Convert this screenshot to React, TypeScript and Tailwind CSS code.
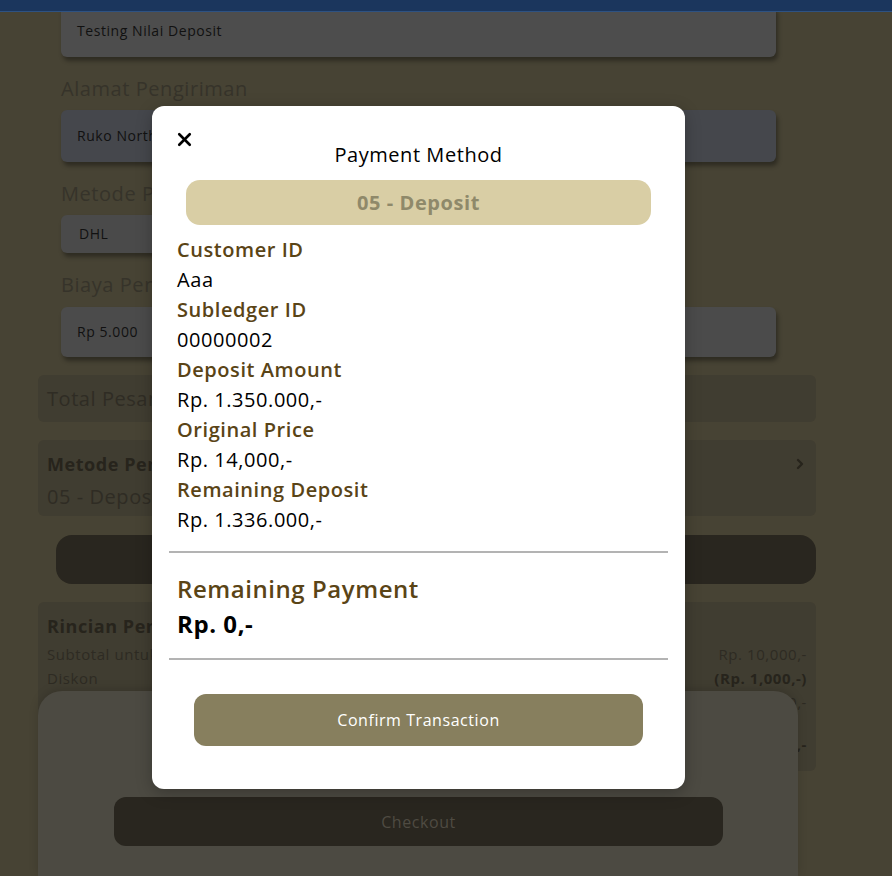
import React from "react";
import { ChevronRight, X } from "lucide-react";

const rows = [
  { label: "Customer ID", value: "Aaa" },
  { label: "Subledger ID", value: "00000002" },
  { label: "Deposit Amount", value: "Rp. 1.350.000,-" },
  { label: "Original Price", value: "Rp. 14,000,-" },
  { label: "Remaining Deposit", value: "Rp. 1.336.000,-" },
];

function Field({ children, className }: { children: React.ReactNode; className?: string }) {
  return (
    <div
      className={
        "flex items-center rounded-md px-4 text-sm text-[#111] shadow-[2px_4px_4px_rgba(0,0,0,0.35)] " +
        (className ?? "")
      }
    >
      {children}
    </div>
  );
}

function Label({ children }: { children: React.ReactNode }) {
  return <div className="mt-[17px] h-[30px] text-xl leading-[30px] text-[#36332a]">{children}</div>;
}

function PaymentModal() {
  return (
    <div className="absolute left-[152px] top-[106px] w-[533px] rounded-xl bg-white px-[17px] pb-[43px] pt-[34px] shadow-[0_4px_16px_rgba(0,0,0,0.25)]">
      <button className="absolute left-[22px] top-[23px] text-black">
        <X size={21} strokeWidth={3} />
      </button>
      <div className="h-[30px] text-center text-xl leading-[30px] text-black">Payment Method</div>
      <div className="mx-[17px] mt-[10px] flex h-[45px] items-center justify-center rounded-[14px] bg-[#d9cea5] text-xl font-bold text-[#8f896a]">
        05 - Deposit
      </div>
      <div className="mt-[10px] px-2">
        {rows.map((r) => (
          <div key={r.label}>
            <div className="h-[30px] text-xl font-semibold leading-[30px] text-[#5a4416]">{r.label}</div>
            <div className="h-[30px] text-xl leading-[30px] text-black">{r.value}</div>
          </div>
        ))}
      </div>
      <div className="mt-4 h-[2px] bg-[#b3b3b3]" />
      <div className="mt-[18px] px-2">
        <div className="h-[35px] text-2xl font-semibold leading-[35px] text-[#5a4416]">Remaining Payment</div>
        <div className="h-[35px] text-2xl font-bold leading-[35px] text-black">Rp. 0,-</div>
      </div>
      <div className="mt-[17px] h-[2px] bg-[#b3b3b3]" />
      <button className="mx-auto mt-[34px] flex h-[52px] w-[449px] items-center justify-center rounded-xl bg-[#877f5e] text-base font-medium text-white">
        Confirm Transaction
      </button>
    </div>
  );
}

export default function App() {
  return (
    <div className="relative h-[876px] overflow-hidden bg-[#474334] font-['Open_Sans',sans-serif] tracking-[0.035em]">
      <div className="relative z-10 h-3 border-b border-[#2e5282] bg-[#1b365d]" />

      <div className="ml-[38px] w-[778px]">
        <div className="pl-[23px] pr-[40px]">
          <Field className="-mt-[7px] h-[52px] bg-[#4d4d4d]">Testing Nilai Deposit</Field>
          <Label>Alamat Pengiriman</Label>
          <Field className="mt-[6px] h-[52px] bg-[#45474c]">Ruko North</Field>
          <Label>Metode Pengiriman</Label>
          <Field className="mt-[6px] h-[38px] w-[320px] bg-[#4a4a4a] text-base text-[#2b2b2b] shadow-[1px_3px_3px_rgba(0,0,0,0.25)]">
            <span className="pl-[2px]">DHL</span>
          </Field>
          <Label>Biaya Pengiriman</Label>
          <Field className="mt-[7px] h-[50px] bg-[#4b4b4b]">Rp 5.000</Field>
        </div>

        <div className="mt-[18px] flex h-[47px] items-center rounded-md bg-[#403d31] px-[9px] text-xl text-[#2f2c24]">
          Total Pesanan
        </div>

        <div className="mt-[18px] h-[76px] rounded-md bg-[#403d31] px-[9px] pt-[12px]">
          <div className="flex items-center justify-between">
            <span className="text-lg font-bold leading-[24px] text-[#27241c]">Metode Pembayaran</span>
            <ChevronRight size={16} strokeWidth={3.5} className="mr-[-1px] text-[#27241c]" />
          </div>
          <div className="mt-[6px] text-xl leading-[30px] text-[#2f2c24]">05 - Deposit</div>
        </div>

        <div className="ml-[18px] mt-[19px] h-[49px] rounded-2xl bg-[#29261f]" />

        <div className="mt-[18px] h-[169px] rounded-md bg-[#403d31] px-[9px] pt-[12px] text-[15px] text-[#2e2b23]">
          <div className="text-lg font-bold leading-[24px] text-[#27241c]">Rincian Pembayaran</div>
          <div className="mt-[4px] flex justify-between leading-[24px]">
            <span>Subtotal untuk Produk</span>
            <span>Rp. 10,000,-</span>
          </div>
          <div className="flex justify-between leading-[24px]">
            <span>Diskon</span>
            <span className="font-bold text-[#27241c]">(Rp. 1,000,-)</span>
          </div>
          <div className="flex justify-between leading-[24px]">
            <span>Ongkir</span>
            <span>Rp. 5.000,-</span>
          </div>
          <div className="mt-[18px] flex justify-between font-bold leading-[24px] text-[#27241c]">
            <span>Total</span>
            <span>Rp. 14,000,-</span>
          </div>
        </div>
      </div>

      <div className="absolute bottom-0 left-[38px] top-[691px] w-[760px] rounded-t-[24px] bg-[#4c4a42] pl-[76px] pt-[106px] shadow-[0_-2px_10px_rgba(0,0,0,0.15)]">
        <button className="flex h-[49px] w-[609px] items-center justify-center rounded-xl bg-[#29261f] text-base text-[#4f4b42]">
          Checkout
        </button>
      </div>

      <PaymentModal />
    </div>
  );
}
